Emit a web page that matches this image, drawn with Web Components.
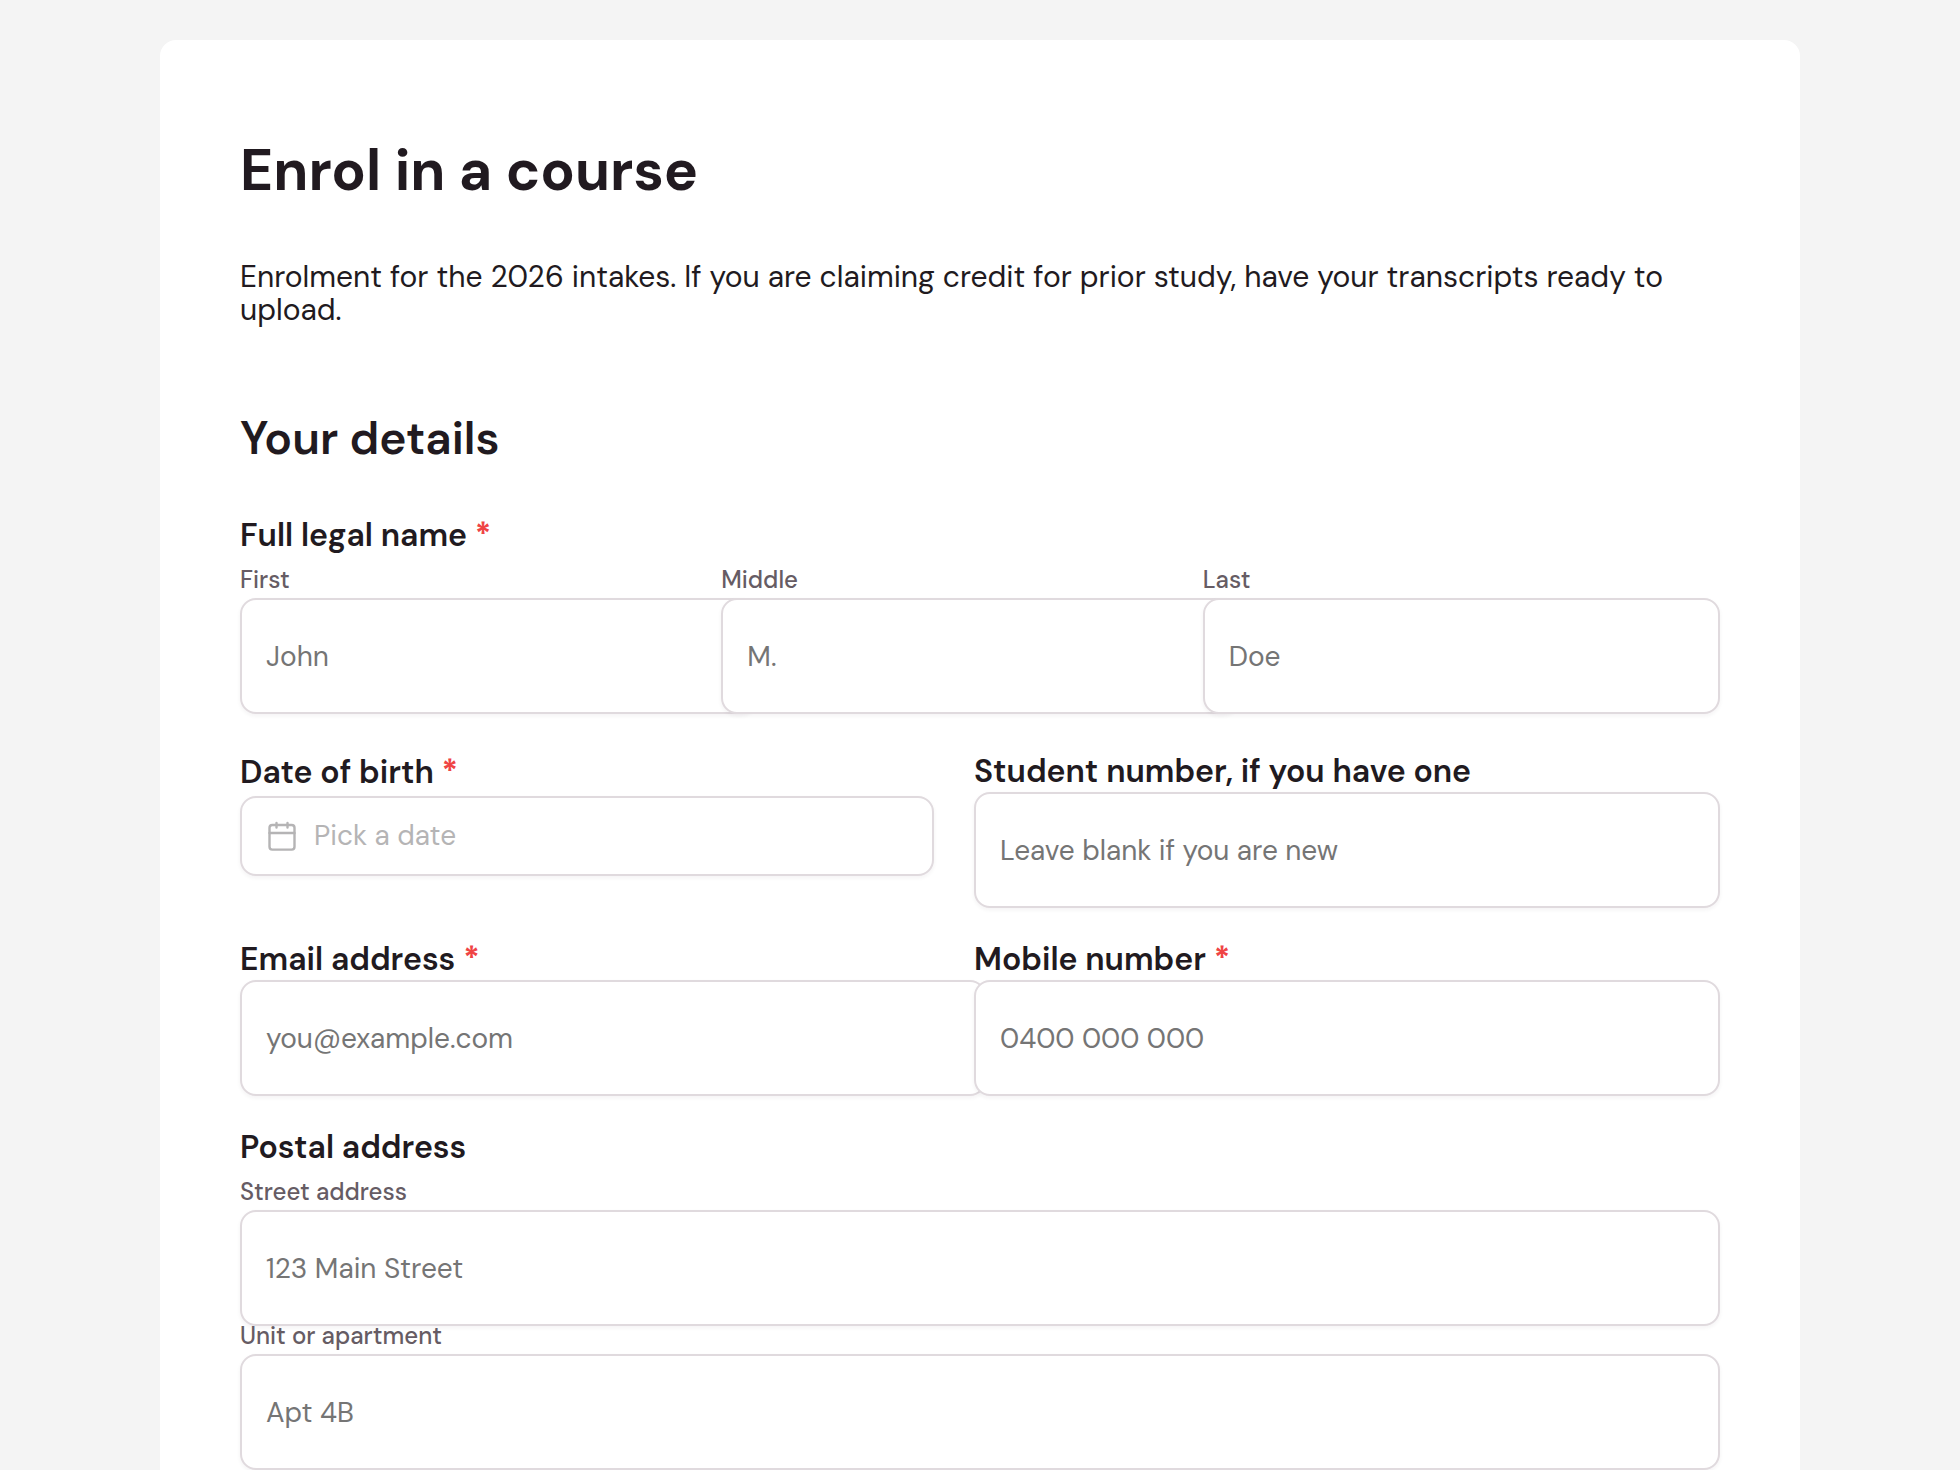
<!DOCTYPE html>
<html lang="en">
<head>
<meta charset="utf-8">
<meta name="viewport" content="width=device-width, initial-scale=1">
<title>Enrol in a course</title>
<style>
  body {
    margin: 0;
    background: #f4f4f4;
    color: #211a20;
    font-family: "DM Sans", "Open Sans", sans-serif;
  }
</style>
</head>
<body>
<form-card>
  <page-heading>Enrol in a course</page-heading>
  <page-intro>Enrolment for the 2026 intakes. If you are claiming credit for prior study, have your transcripts ready to upload.</page-intro>
  <section-heading>Your details</section-heading>
  <form-body>
    <field-group caption="Full legal name" required columns="3">
      <text-field minor label="First" placeholder="John" autocomplete="given-name"></text-field>
      <text-field minor label="Middle" placeholder="M." autocomplete="additional-name"></text-field>
      <text-field minor label="Last" placeholder="Doe" autocomplete="family-name"></text-field>
    </field-group>
    <field-row>
      <date-field label="Date of birth" placeholder="Pick a date" required></date-field>
      <text-field label="Student number, if you have one" placeholder="Leave blank if you are new"></text-field>
    </field-row>
    <field-row>
      <text-field label="Email address" type="email" placeholder="you@example.com" autocomplete="email" required></text-field>
      <text-field label="Mobile number" type="tel" placeholder="0400 000 000" autocomplete="tel" required></text-field>
    </field-row>
    <field-group caption="Postal address" columns="1">
      <text-field minor label="Street address" placeholder="123 Main Street" autocomplete="address-line1"></text-field>
      <text-field minor label="Unit or apartment" placeholder="Apt 4B" autocomplete="address-line2"></text-field>
    </field-group>
  </form-body>
</form-card>

<script>
  const define = (name, render, setup) =>
    customElements.define(name, class extends HTMLElement {
      connectedCallback() {
        if (this.shadowRoot) return;
        const root = this.attachShadow({ mode: 'open' });
        root.innerHTML = render(this);
        if (setup) setup(this, root);
      }
    });

  const star = el => el.hasAttribute('required') ? ' <span class="star">*</span>' : '';

  /* Caption text shared by single fields and groups of fields. */
  const captionStyle = `
    .caption { display: block; font-size: 32px; font-weight: 600; line-height: 22px; }
    .star { color: #ef4444; font-weight: 800; }`;

  /* Outline shared by every control. */
  const controlStyle = `
    border: 2px solid #e0dade;
    border-radius: 16px;
    background: #fff;
    box-shadow: 0 2px 4px rgba(33, 26, 32, 0.05);
    font-family: inherit;
    font-size: 28px;
    font-weight: 400;`;

  define('form-card', () => `
    <style>
      :host { display: block; padding: 40px; }
      main { max-width: 1480px; margin: 0 auto; padding: 100px 80px 80px; background: #fff; border-radius: 16px; }
    </style>
    <main><slot></slot></main>`);

  define('page-heading', () => `
    <style>
      :host { display: block; }
      h1 { margin: 0; font-size: 57px; line-height: 62px; font-weight: 700; }
    </style>
    <h1><slot></slot></h1>`);

  define('page-intro', () => `
    <style>
      :host { display: block; margin-top: 58px; }
      p { margin: 0; font-size: 30px; line-height: 33px; }
    </style>
    <p><slot></slot></p>`);

  define('section-heading', () => `
    <style>
      :host { display: block; margin-top: 88px; }
      h2 { margin: 0; font-size: 46px; line-height: 48px; font-weight: 600; }
    </style>
    <h2><slot></slot></h2>`);

  define('form-body', () => `
    <style>
      :host { display: block; margin: 62px 52px 0 0; }
      form { display: flex; flex-direction: column; gap: 40px; }
    </style>
    <form><slot></slot></form>`);

  define('field-row', () => `
    <style>
      :host { display: grid; grid-template-columns: 1fr 1fr; gap: 40px; align-items: start; }
    </style>
    <slot></slot>`);

  define('field-group', el => `
    <style>
      :host { display: block; }
      ${captionStyle}
      .fields { display: grid; column-gap: 16px; margin-top: 24px; }
      :host([columns="3"]) .fields { grid-template-columns: repeat(3, 1fr); margin-bottom: 6px; }
    </style>
    <div role="group" aria-labelledby="caption">
      <span class="caption" id="caption">${el.getAttribute('caption')}${star(el)}</span>
      <div class="fields"><slot></slot></div>
    </div>`);

  /* The box keeps its padding and border outside its column's width. */
  define('text-field', el => `
    <style>
      :host { display: block; min-width: 0; }
      ${captionStyle}
      label { margin-bottom: 10px; }
      :host([minor]) label { margin-bottom: 8px; font-size: 24px; font-weight: 500; line-height: 20px; color: #665c64; }
      input {
        ${controlStyle}
        display: block;
        box-sizing: content-box;
        width: 100%;
        height: 64px;
        margin: 0;
        padding: 24px;
        color: inherit;
      }
      input::placeholder { color: #757575; opacity: 1; }
    </style>
    <label class="caption" for="control">${el.getAttribute('label')}${star(el)}</label>
    <input id="control">`,
    (el, root) => {
      const input = root.querySelector('input');
      input.type = el.getAttribute('type') || 'text';
      input.placeholder = el.getAttribute('placeholder') || '';
      input.autocomplete = el.getAttribute('autocomplete') || 'off';
      input.required = el.hasAttribute('required');
    });

  define('date-field', el => `
    <style>
      :host { display: block; min-width: 0; }
      ${captionStyle}
      label { line-height: 24px; margin-bottom: 12px; }
      button {
        ${controlStyle}
        display: flex;
        align-items: center;
        gap: 16px;
        box-sizing: border-box;
        width: 100%;
        height: 80px;
        margin: 0;
        padding: 0 24px;
        line-height: 36px;
        color: #b5b4b5;
        text-align: left;
      }
      label.caption { line-height: 24px; }
      svg { flex: none; width: 32px; height: 32px; }
    </style>
    <label class="caption" for="control">${el.getAttribute('label')}${star(el)}</label>
    <button type="button" id="control">
      <svg viewBox="0 0 32 32" fill="none" stroke="currentColor" stroke-width="2.4" stroke-linecap="round" stroke-linejoin="round" aria-hidden="true">
        <rect x="3.5" y="5" width="25" height="24.6" rx="2.8"/>
        <path d="M10.5 3v4.6M21.5 3v4.6M3.5 13h25"/>
      </svg>
      <span>${el.getAttribute('placeholder')}</span>
    </button>`);
</script>
</body>
</html>
